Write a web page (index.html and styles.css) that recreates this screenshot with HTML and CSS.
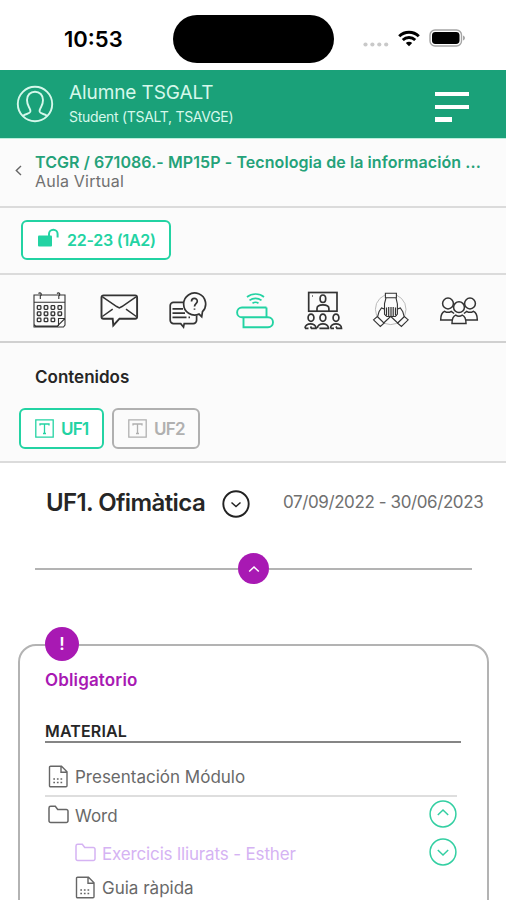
FILE: index.html
```html
<!DOCTYPE html>
<html lang="es">
<head>
    <meta charset="UTF-8">
    <meta name="viewport" content="width=device-width, initial-scale=1.0">
    <title>Aula Virtual - Contenidos</title>
    <link rel="stylesheet" href="styles.css">
</head>
<body>
    <div class="status-bar">
        <span class="time">10:53</span>
        <div class="island"></div>
        <div class="status-icons">
            <svg width="26" height="5" viewBox="0 0 26 5" fill="#c9c9c9">
                <circle cx="2.5" cy="2.5" r="2.1"/><circle cx="9.4" cy="2.5" r="2.1"/><circle cx="16.3" cy="2.5" r="2.1"/><circle cx="23.2" cy="2.5" r="2.1"/>
            </svg>
            <svg class="wifi" width="22" height="17" viewBox="0 0 22 17" fill="none" stroke="#000" stroke-width="2.9">
                <path d="M1.2 6.2a14 14 0 0 1 19.6 0M4.8 10a8.8 8.8 0 0 1 12.4 0"/>
                <path d="M11 16.3l-3.2-3.3a4.6 4.6 0 0 1 6.4 0z" fill="#000" stroke="none"/>
            </svg>
            <svg class="battery" width="37" height="18" viewBox="0 0 37 18">
                <rect x="1" y="1" width="31.5" height="16" rx="5" fill="#fff" stroke="#a5a5a5" stroke-width="1.4"/>
                <rect x="3" y="3" width="27.5" height="12" rx="3.4"/>
                <path d="M34 6.5c2.6 1 2.6 4 0 5z" fill="#a5a5a5"/>
            </svg>
        </div>
    </div>

    <header class="header">
        <svg class="avatar" width="38" height="38" viewBox="0 0 38 38" fill="none" stroke="#d5f8eb" stroke-width="1.9">
            <circle cx="19" cy="19" r="17.2"/>
            <path d="M7 31c2-2.400 6.500-1.800 7.300-4.300.5-2-.4-2.700-1.300-4.400-1.300-2.300-2-4.500-2-7.300 0-5 3.300-8.300 8-8.300s8 3.300 8 8.300c0 2.800-.7 5-2 7.300-.9 1.700-1.800 2.400-1.300 4.400.8 2.500 5.300 1.900 7.300 4.300"/>
        </svg>
        <div class="user">
            <div class="user-name">Alumne TSGALT</div>
            <div class="user-role">Student (TSALT, TSAVGE)</div>
        </div>
        <div class="menu"><span></span><span></span><span></span></div>
    </header>

    <div class="breadcrumb">
        <svg width="7" height="11" viewBox="0 0 7 11" fill="none" stroke="#666" stroke-width="1.4"><path d="M6 1L1.300 5.500 6 10"/></svg>
        <div class="crumbs">
            <div class="course">TCGR / 671086.- MP15P - Tecnologia de la información ...</div>
            <div class="room">Aula Virtual</div>
        </div>
    </div>

    <div class="group-row">
        <div class="btn btn-group">
            <svg width="22" height="19" viewBox="0 0 22 19" fill="none" stroke="#23d3a3" stroke-width="2">
                <rect x="1" y="7.500" width="14" height="11" rx="1" fill="#23d3a3" stroke="none"/>
                <path d="M12 9V6a4.300 4.300 0 0 1 8.600 0v3.500"/>
            </svg>
            <span>22-23 (1A2)</span>
        </div>
    </div>

    <nav class="tools">
        <svg viewBox="0 0 40 40" stroke-width="1.1">
            <path d="M3 5h31v23.500L26.500 36H4.500L3 34.500zM3 12.300h31M3 34.500V37h29.500l1.500-2v-6.500h-6.500V36"/>
            <path d="M7.500 3.500c2-2 4 1 1.800 2.500v3M26 3.500c2-2 4 1 1.800 2.500v3"/>
            <g stroke-width="1.300">
                <rect x="6.300" y="15.700" width="3.600" height="3.600" rx=".8"/><rect x="13.200" y="15.700" width="3.600" height="3.600" rx=".8"/><rect x="20.100" y="15.700" width="3.600" height="3.600" rx=".8"/><rect x="27" y="15.700" width="3.600" height="3.600" rx=".8"/>
                <rect x="6.300" y="21.900" width="3.600" height="3.600" rx=".8"/><rect x="13.200" y="21.900" width="3.600" height="3.600" rx=".8"/><rect x="20.100" y="21.900" width="3.600" height="3.600" rx=".8"/><rect x="27" y="21.900" width="3.600" height="3.600" rx=".8"/>
                <rect x="6.300" y="28.100" width="3.600" height="3.600" rx=".8"/><rect x="13.200" y="28.100" width="3.600" height="3.600" rx=".8"/><rect x="20.100" y="28.100" width="3.600" height="3.600" rx=".8"/>
            </g>
        </svg>
        <svg viewBox="0 0 40 40" stroke-width="1.900">
            <path d="M4.500 5.400h31.600a2 2 0 0 1 2 2v19.300a2 2 0 0 1-2 2H20.500L14.300 35.500l-.6-6.800H4.500a2 2 0 0 1-2-2V7.400a2 2 0 0 1 2-2z"/>
            <path stroke-width="1.500" d="M3.500 6.800l14.200 9.700 2.600 1.500 2.700-1.500L37 6.800M3.300 26.500l10.400-7.300M37.300 26.500L27 19.200"/>
        </svg>
        <svg viewBox="0 0 40 40" stroke-width="1.700">
            <path d="M16.500 12.300H6.500a3.300 3.300 0 0 0-3.300 3.300v14.700a3.300 3.300 0 0 0 3.300 3.300h7.200l2.800 3.500.7-3.500h9.100a3.300 3.300 0 0 0 3.300-3.300v-4.800"/>
            <path d="M32 24.100a11 11 0 1 1 3.500-2.400l-.8 5z"/>
            <path d="M24.500 11.500c0-4 5.800-4 5.800-.3 0 2.400-2.800 2.500-2.800 5.300M27.500 18.500v1.300M5.500 18.900H16M5.500 23.100h12.500M5.500 27.300h14M21.500 27.300h1.500"/>
        </svg>
        <svg class="active" viewBox="0 0 40 40" stroke-width="1.900">
            <path d="M31.500 17.500H7a4.700 4.700 0 0 0 0 9.800M31.500 17.500v9.800M7 27.300h26a5 5 0 0 1 0 10H8.500v-10"/>
            <path stroke-width="1.700" d="M12 7c5-4 12.500-4 17 0M14.500 10.300c3.500-2.700 8.500-2.700 12 0M17.500 13.300c1.900-1.300 4.200-1.300 6 0"/>
        </svg>
        <svg viewBox="0 0 40 40" stroke-width="1.700">
            <rect x="5.700" y="2.500" width="28.300" height="18.700"/>
            <ellipse cx="19.900" cy="8.700" rx="2.800" ry="3.700"/>
            <path d="M14 21v-2.500c0-2.500 2-3.700 5.900-3.700s6 1.200 6 3.700V21M9 6h.8"/>
            <ellipse cx="8" cy="27.700" rx="2.900" ry="3.600"/><ellipse cx="19.900" cy="27.700" rx="2.900" ry="3.600"/><ellipse cx="33" cy="27.700" rx="2.900" ry="3.600"/>
            <path d="M2 38.300c0-6 11-6 11 0H8.500l-1-1.800M14.400 38.300c0-6 11-6 11 0h-9M27.500 38.300c0-6 11-6 11 0H34l-1-1.800M2 38.300h3.500M27.500 38.300H31"/>
        </svg>
        <svg viewBox="0 0 40 40" stroke-width="1.100">
            <circle cx="19.700" cy="19.300" r="15.300" stroke="#aaa" stroke-width=".8"/>
            <path fill="#fbfbfb" d="M12.700 33l7.200-6.800-2.300-2-3 .8v-5.500L10.500 18 8 21.800 6.500 27zM26.700 33l-7.200-6.800 2.400-2 3.400.8v-5.500l4-1.500 2.500 3.800L33.300 27z"/>
            <path fill="#fbfbfb" d="M14.400 3.300h11v4.500h-11zM15 7.800l-1.500 5.700v10.800l2.300 2.200h8.600l2-2.400V14L25 7.800z"/>
            <path stroke-width="1.200" d="M15.500 17.500v8M17.700 17v9M20 17v9M22.200 17v9M24.500 17.500v8"/>
            <path fill="#fbfbfb" d="M2.500 29.800l3.800-3.300 6.700 6.700-3.700 3.300zM37.200 29.800l-3.800-3.300-6.700 6.700 3.700 3.300z"/>
        </svg>
        <svg viewBox="0 0 40 40" stroke-width="1.500">
            <circle cx="9" cy="13.500" r="5.400"/><circle cx="31" cy="13.500" r="5.400"/>
            <path d="M13 30H1.700c0-4.500.7-7.500 4-8.700 2 1.300 4.500 1.300 6.600 0l2.800 2.200M27 30h11.300c0-4.500-.7-7.500-4-8.700-2 1.300-4.500 1.300-6.600 0l-2.800 2.200"/>
            <circle cx="20" cy="17.200" r="5.400" fill="#fbfbfb"/>
            <path d="M13 33.600c0-4.500.4-7.300 3.700-8.500 2 1.300 4.500 1.300 6.600 0 3.300 1.200 3.700 4 3.700 8.500z"/>
        </svg>
    </nav>

    <section class="contents">
        <div class="contents-title">Contenidos</div>
        <div class="tabs">
            <div class="btn btn-tab active">
                <svg width="19" height="19" viewBox="0 0 19 19" fill="none" stroke="currentColor" stroke-width="1.300"><path d="M.8.8h17.400v17.400H.8zM5 6.500V5h9v1.500M9.500 5v9.500M8 14.500h3"/></svg>
                <span>UF1</span>
            </div>
            <div class="btn btn-tab">
                <svg width="19" height="19" viewBox="0 0 19 19" fill="none" stroke="currentColor" stroke-width="1.300"><path d="M.8.8h17.400v17.400H.8zM5 6.500V5h9v1.500M9.500 5v9.500M8 14.500h3"/></svg>
                <span>UF2</span>
            </div>
        </div>
    </section>

    <main>
        <div class="unit">
            <h1>UF1. Ofimàtica</h1>
            <svg width="28" height="28" viewBox="0 0 28 28" fill="none" stroke="#222"><circle cx="14" cy="14" r="12.700" stroke-width="1.900"/><path stroke-width="1.500" d="M9.500 12.500l4.500 4 4.500-4"/></svg>
            <span class="dates">07/09/2022 - 30/06/2023</span>
        </div>

        <div class="divider">
            <span class="divider-btn"><svg width="12" height="8" viewBox="0 0 12 8" fill="none" stroke="#fff" stroke-width="1.500"><path d="M1.200 6.500L6 2l4.800 4.500"/></svg></span>
        </div>

        <div class="card">
            <div class="badge">!</div>
            <div class="card-label">Obligatorio</div>
            <div class="card-heading">MATERIAL</div>
            <div class="item item-first">
                <svg width="21" height="23" viewBox="0 0 21 23" fill="none" stroke="#666" stroke-width="1.400"><path d="M2.500 1.200h11l5.500 5.500v14a1 1 0 0 1-1 1H2.500a1 1 0 0 1-1-1V2.200a1 1 0 0 1 1-1zM13 1.500v5.700h5.700"/><path stroke-width="1.700" stroke-dasharray="1.700 1.900" d="M5.300 14h9M5.300 17.500h9"/></svg>
                <span class="doc-name">Presentación Módulo</span>
            </div>
            <div class="item item-folder">
                <svg width="21" height="19" viewBox="0 0 21 19" fill="none" stroke="#666" stroke-width="1.500"><path d="M1 3a1.700 1.700 0 0 1 1.700-1.700h4.600L9.700 4.500h8.600A1.700 1.700 0 0 1 20 6.200v9.600a1.700 1.700 0 0 1-1.700 1.700H2.700A1.700 1.700 0 0 1 1 15.800z"/></svg>
                <span class="folder-name">Word</span>
                <svg class="toggle" width="28" height="28" viewBox="0 0 28 28" fill="none" stroke="#33cfa2" stroke-width="1.500"><circle cx="14" cy="14" r="12.900"/><path d="M8.800 15l5.200-5 5.200 5"/></svg>
            </div>
            <div class="item nested shared">
                <svg width="21" height="19" viewBox="0 0 21 19" fill="none" stroke="#d5b3f3" stroke-width="1.500"><path d="M1 3a1.700 1.700 0 0 1 1.700-1.700h4.600L9.700 4.500h8.600A1.700 1.700 0 0 1 20 6.200v9.600a1.700 1.700 0 0 1-1.700 1.700H2.700A1.700 1.700 0 0 1 1 15.800z"/></svg>
                <span class="shared-name">Exercicis lliurats - Esther</span>
                <svg class="toggle" width="28" height="28" viewBox="0 0 28 28" fill="none" stroke="#33cfa2" stroke-width="1.500"><circle cx="14" cy="14" r="12.900"/><path d="M8.800 12l5.200 5 5.200-5"/></svg>
            </div>
            <div class="item item-file nested">
                <svg width="21" height="23" viewBox="0 0 21 23" fill="none" stroke="#666" stroke-width="1.400"><path d="M2.500 1.200h11l5.500 5.500v14a1 1 0 0 1-1 1H2.500a1 1 0 0 1-1-1V2.200a1 1 0 0 1 1-1zM13 1.500v5.700h5.700"/><path stroke-width="1.700" stroke-dasharray="1.700 1.900" d="M5.300 14h9M5.300 17.500h9"/></svg>
                <span class="guide-name">Guia ràpida</span>
            </div>
        </div>
    </main>
</body>
</html>
```
FILE: styles.css
```css
* {
    box-sizing: border-box;
    margin: 0;
    padding: 0;
}

body {
    width: 506px;
    height: 900px;
    overflow: hidden;
    background-color: #fff;
    color: #262626;
    font-family: Inter, "Liberation Sans", sans-serif;
    font-size: 17px;
    white-space: nowrap;
}

svg {
    display: block;
    flex-shrink: 0;
}

.status-bar {
    display: flex;
    height: 70px;
    padding: 15px 0 0 64px;
}

.time {
    width: 109px;
    padding-top: 10px;
    color: #000;
    font-size: 22px;
    font-weight: 600;
    line-height: 28px;
}

.island {
    width: 161px;
    height: 48px;
    border-radius: 24px;
    background-color: #000;
}

.status-icons {
    display: flex;
    align-items: flex-end;
    height: 32px;
    padding-left: 29px;
}

.wifi {
    margin-left: 9px;
}

.battery {
    margin-left: 9px;
}

.header {
    display: flex;
    height: 68px;
    padding: 0 37px 0 16px;
    background-color: #1aa179;
    color: #d5f8eb;
}

.avatar {
    margin-top: 15px;
}

.user {
    padding: 11px 0 0 15px;
}

.user-name {
    font-size: 19px;
    letter-spacing: -0.1px;
    line-height: 24px;
}

.user-role {
    margin-top: 2px;
    font-size: 14px;
    letter-spacing: -0.3px;
    line-height: 20px;
}

.menu {
    display: flex;
    flex-direction: column;
    gap: 8.5px;
    margin: 22px 0 0 auto;
}

.menu span {
    width: 34px;
    height: 4.2px;
    background-color: #fff;
}

.menu span:last-child {
    width: 17px;
}

.breadcrumb {
    display: flex;
    gap: 13px;
    height: 70px;
    padding: 14px 0 0 15px;
    border-top: 1px solid #b9efdc;
    border-bottom: 2px solid #dbdbdb;
    background-color: #fbfbfb;
}

.breadcrumb svg {
    margin-top: 12px;
}

.course {
    color: #24a279;
    font-size: 16px;
    font-weight: 600;
    letter-spacing: 0.08px;
    line-height: 19px;
}

.room {
    color: #707070;
    font-size: 16px;
    letter-spacing: 0.2px;
    line-height: 18px;
}

.group-row {
    height: 67px;
    padding: 12px 21px;
    border-bottom: 2px solid #dbdbdb;
    background-color: #fbfbfb;
}

.btn {
    display: flex;
    align-items: center;
    height: 41px;
    border: 2px solid #b0b0b0;
    border-radius: 6px;
    color: #b0b0b0;
    font-weight: 600;
}

.btn-group {
    width: 150px;
    height: 40px;
    padding-left: 14px;
    gap: 8px;
    border-color: #23d3a3;
    background-color: #fff;
    color: #23d3a3;
    font-size: 16px;
    letter-spacing: -0.25px;
}

.btn-group svg {
    margin-top: -5px;
}

.tools {
    display: grid;
    grid-template-columns: repeat(7, 68px);
    justify-content: center;
    justify-items: center;
    height: 68px;
    padding: 15px 0 0 4px;
    border-bottom: 2px solid #d0d0d0;
    background-color: #fbfbfb;
}

.tools svg {
    width: 40px;
    height: 40px;
    fill: none;
    stroke: #333;
}

.tools .active {
    stroke: #23d3a3;
}

.contents {
    height: 120px;
    border-bottom: 2px solid #dbdbdb;
    background-color: #fbfbfb;
}

.contents-title {
    padding: 23px 0 0 35px;
    font-weight: 600;
    line-height: 22px;
}

.tabs {
    display: flex;
    gap: 8px;
    padding: 20px 0 0 19px;
}

.btn-tab {
    width: 88px;
    padding-left: 14px;
    gap: 7px;
    letter-spacing: -0.8px;
}

.btn-tab.active {
    width: 85px;
    border-color: #23d3a3;
    background-color: #fff;
    color: #23d3a3;
}

.unit {
    display: flex;
    height: 68px;
    padding: 27px 0 0 46px;
}

.unit h1 {
    width: 176px;
    font-size: 24px;
    font-weight: 600;
    letter-spacing: -0.6px;
    line-height: 26px;
}

.dates {
    padding-left: 33px;
    color: #707070;
    letter-spacing: -0.4px;
    line-height: 24px;
}

.divider {
    display: flex;
    align-items: center;
    height: 75px;
    padding: 0 34px 0 35px;
}

.divider::before,
.divider::after {
    content: '';
    flex: 1;
    border-bottom: 2px solid #b3b3b3;
}

.divider-btn {
    display: flex;
    align-items: center;
    justify-content: center;
    width: 31px;
    height: 31px;
    border-radius: 50%;
    background-color: #a819b3;
}

.card {
    position: relative;
    height: 300px;
    margin: 38px 17px 0 18px;
    padding: 22px 26px 0 25px;
    border: 2px solid #b3b3b3;
    border-radius: 18px;
}

.badge {
    position: absolute;
    top: -19px;
    left: 25px;
    width: 34px;
    height: 34px;
    border-radius: 50%;
    background-color: #a819b3;
    color: #fff;
    font-size: 17px;
    font-weight: 600;
    line-height: 34px;
    text-align: center;
}

.card-label {
    color: #a819b3;
    font-weight: 600;
    letter-spacing: 0.15px;
    line-height: 24px;
}

.card-heading {
    height: 30px;
    margin-top: 21px;
    padding-top: 8px;
    border-bottom: 2px solid #858585;
    font-size: 16px;
    font-weight: 600;
    letter-spacing: 0.15px;
    line-height: 20px;
}

.item {
    display: flex;
    align-items: center;
    gap: 6px;
    height: 42px;
    margin-right: 4px;
    padding-left: 3px;
    color: #696969;
}

.item-first {
    height: 54px;
    padding-top: 14px;
    border-bottom: 2px solid #dedede;
}

.item-folder {
    height: 34px;
}

.item-file {
    height: 28px;
}

.doc-name,
.guide-name {
    padding-top: 2px;
}

.folder-name,
.shared-name {
    padding-top: 4px;
}

.shared-name {
    letter-spacing: -0.15px;
}

.toggle {
    margin-left: auto;
}

.nested {
    padding-left: 30px;
}

.shared {
    color: #d5b3f3;
}
```
